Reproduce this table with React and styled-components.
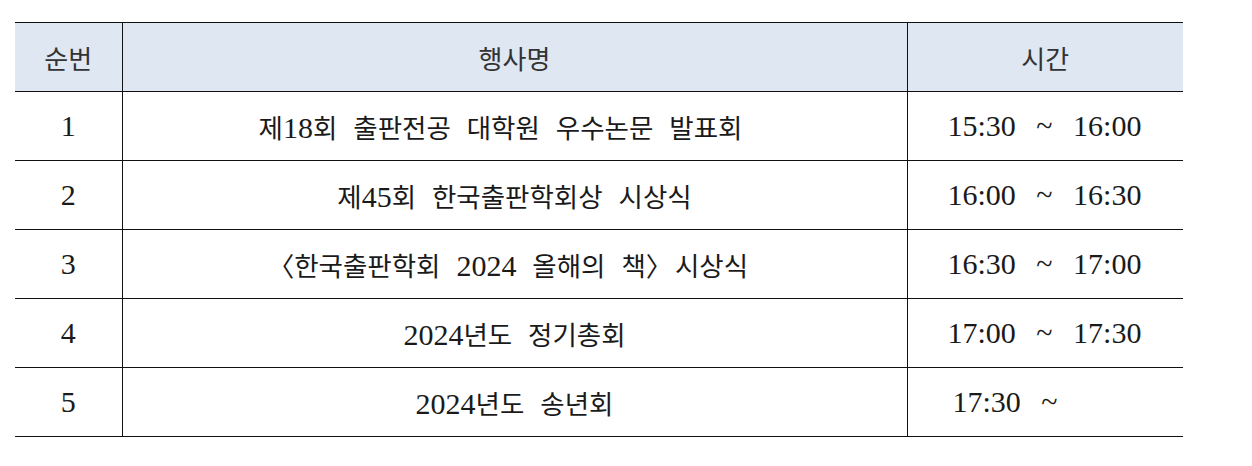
import React from "react";
import styled, { createGlobalStyle } from "styled-components";

const GlobalStyle = createGlobalStyle`
  html, body {
    margin: 0;
    padding: 0;
    background: #ffffff;
  }
`;

const rows = [
  { no: "1", name: "제18회 출판전공 대학원 우수논문 발표회", time: "15:30 ~ 16:00", shift: true },
  { no: "2", name: "제45회 한국출판학회상 시상식", time: "16:00 ~ 16:30" },
  { no: "3", name: "〈한국출판학회 2024 올해의 책〉 시상식", time: "16:30 ~ 17:00" },
  { no: "4", name: "2024년도 정기총회", time: "17:00 ~ 17:30" },
  { no: "5", name: "2024년도 송년회", time: "17:30 ~", indent: true },
];

// digits get the serif face, hangul stays in the CJK face
const mixed = (text) =>
  text.split(/([0-9:~]+)/).map((part, i) =>
    /^[0-9:~]+$/.test(part) ? <Num key={i}>{part}</Num> : part
  );

const Page = () => {
  return (
    <Wrapper>
      <GlobalStyle />
      <Table>
        <colgroup>
          <col style={{ width: 107 }} />
          <col style={{ width: 785 }} />
          <col style={{ width: 276 }} />
        </colgroup>
        <thead>
          <tr>
            <HeadCell>순번</HeadCell>
            <HeadCell>행사명</HeadCell>
            <HeadCell>시간</HeadCell>
          </tr>
        </thead>
        <tbody>
          {rows.map((r) => (
            <tr key={r.no}>
              <NoCell>{r.no}</NoCell>
              <Cell $shift={r.shift}>{mixed(r.name)}</Cell>
              <TimeCell $indent={r.indent}>{r.time}</TimeCell>
            </tr>
          ))}
        </tbody>
      </Table>
    </Wrapper>
  );
};

export default Page;

const Wrapper = styled.div`
  padding: 22px 0 0 15px;
  width: 1252px;
  height: 466px;
  box-sizing: border-box;
`;

const Table = styled.table`
  border-collapse: collapse;
  table-layout: fixed;
  width: 1168px;

  tr {
    height: 69px;
  }

  th,
  td {
    border-top: 1.5px solid #111;
    border-bottom: 1.5px solid #111;
    border-left: 1px solid #111;
    padding: 0;
    vertical-align: middle;
    white-space: nowrap;
  }

  th:first-child,
  td:first-child {
    border-left: none;
  }
`;

const HeadCell = styled.th`
  background: #dfe7f3;
  font-family: "Noto Sans CJK KR", "Noto Sans", sans-serif;
  font-weight: 400;
  font-size: 26px;
  color: #333333;
  text-align: center;
`;

const Cell = styled.td`
  font-family: "Noto Sans CJK KR", "Noto Sans", sans-serif;
  font-size: 26.5px;
  font-feature-settings: "halt";
  word-spacing: 10px;
  color: #1a1a1a;
  text-align: center;
  padding-right: ${(p) => (p.$shift ? "28px" : "0")} !important;
`;

const Num = styled.span`
  font-family: "Liberation Serif", serif;
  font-size: 30px;
  word-spacing: normal;
`;

const NoCell = styled.td`
  font-family: "Liberation Serif", serif;
  font-size: 30px;
  color: #1a1a1a;
  text-align: center;
`;

const TimeCell = styled.td`
  font-family: "Liberation Serif", serif;
  font-size: 30px;
  word-spacing: 13px;
  color: #1a1a1a;
  text-align: left;
  padding-left: ${(p) => (p.$indent ? "45px" : "40px")} !important;
`;
